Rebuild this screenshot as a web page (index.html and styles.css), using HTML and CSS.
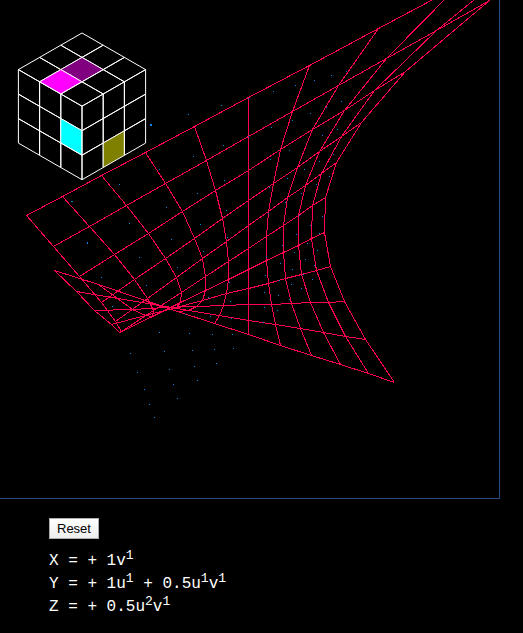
FILE: index.html
```html
<!DOCTYPE html>
<html lang="en">
<head>
  <meta charset="utf-8">
  <title>Surface viewer</title>
  <link rel="stylesheet" href="styles.css">
</head>
<body>
  <main>
    <div class="stage">
      <svg class="plot" viewBox="0 0 499 498" role="img" aria-label="Surface plot">
        <g id="cube" class="cube"></g>
        <g id="mesh" class="mesh"></g>
        <g id="dots" class="dots"></g>
      </svg>
    </div>
    <section class="panel">
      <button type="button" class="reset">Reset</button>
      <div class="equations">
        <p>X = + 1v<sup>1</sup></p>
        <p>Y = + 1u<sup>1</sup> + 0.5u<sup>1</sup>v<sup>1</sup></p>
        <p>Z = + 0.5u<sup>2</sup>v<sup>1</sup></p>
      </div>
    </section>
  </main>
  <script src="plot.js"></script>
</body>
</html>
```
FILE: styles.css
```css
body {
  margin: 0;
  background: #000;
  color: #fff;
  font-family: "Courier New", "Liberation Mono", monospace;
  font-size: 16px;
}

.stage {
  margin-right: 23px;
  border-right: 1px solid #264a80;
  border-bottom: 1px solid #264a80;
}

.plot {
  display: block;
  width: 100%;
  height: auto;
  overflow: hidden;
}

.cube polygon {
  fill: none;
  stroke: #fff;
  stroke-width: 1;
}

.cube .purple { fill: #800080; }
.cube .magenta { fill: #f0f; }
.cube .cyan { fill: #0ff; }
.cube .olive { fill: #808000; }

.mesh polyline {
  fill: none;
  stroke: #ff0051;
  stroke-width: 1;
  shape-rendering: crispEdges;
}

.dots rect {
  fill: #0a84f0;
  shape-rendering: crispEdges;
}

.panel {
  padding: 19px 49px;
}

.reset {
  display: block;
  height: 21px;
  padding: 0 7px;
  border: 1px solid #adadad;
  border-radius: 0;
  background: linear-gradient(#fff, #eee);
  color: #000;
  font: 13px "Liberation Sans", Arial, sans-serif;
}

.equations {
  margin-top: 11px;
}

.equations p {
  margin: 0;
  line-height: 23px;
}

.equations sup {
  font-size: 13px;
  line-height: 0;
  vertical-align: 6px;
}
```
FILE: plot.js
```js
const NS = "http://www.w3.org/2000/svg";

function add(parent, name, attrs) {
  const el = document.createElementNS(NS, name);
  for (const key in attrs) el.setAttribute(key, attrs[key]);
  document.getElementById(parent).appendChild(el);
}

// Each row is a straight line in v: its points at v = -1, 0 and 1.
const rows = [
  [[26, 215], [248, 98], [655, -119]],
  [[53, 246], [248, 137], [489, 0]],
  [[79, 276], [248, 170], [405, 71]],
  [[101, 302], [248, 199], [361, 122]],
  [[115, 321], [248, 225], [336, 162]],
  [[121, 331], [248, 248], [325, 197]],
  [[119, 332], [248, 269], [324, 232]],
  [[111, 324], [248, 288], [330, 266]],
  [[94, 310], [248, 305], [344, 301]],
  [[76, 291], [248, 319], [365, 339]],
  [[54, 270], [248, 334], [394, 382]]
];

// Perspective interpolation along a row.
function at([a, c, b], v) {
  const wa = (b[0] - c[0]) * (1 - v);
  const wb = (c[0] - a[0]) * (1 + v);
  return [0, 1].map(k => Math.round((wa * a[k] + wb * b[k]) / (wa + wb)) + 0.5);
}

const steps = [-5, -4, -3, -2, -1, 0, 1, 2, 3, 4, 5].map(n => n / 5);
const grid = rows.map(row => steps.map(v => at(row, v)));
grid.forEach(line => add("mesh", "polyline", { points: line.join(" ") }));
steps.forEach((v, i) => add("mesh", "polyline", { points: grid.map(line => line[i]).join(" ") }));

// Cube faces: origin and the two cell edges.
const faces = [
  { o: [82, 33], p: [21.2, 12.2], q: [-21.2, 12.2], fill: { "1,1": "purple", "1,2": "magenta" } },
  { o: [18.4, 69.6], p: [21.2, 12.2], q: [0, 24.5], fill: { "2,1": "cyan" } },
  { o: [82, 106.2], p: [21.2, -12.2], q: [0, 24.5], fill: { "1,2": "olive" } }
];
for (const { o, p, q, fill } of faces) {
  for (let i = 0; i < 3; i++) {
    for (let j = 0; j < 3; j++) {
      const corner = (a, b) => [o[0] + a * p[0] + b * q[0], o[1] + a * p[1] + b * q[1]];
      add("cube", "polygon", {
        points: [corner(i, j), corner(i + 1, j), corner(i + 1, j + 1), corner(i, j + 1)].join(" "),
        class: fill[i + "," + j] || "cell"
      });
    }
  }
}

const dots = [
  [119, 184], [159, 169], [71, 201, 2, 1], [129, 223], [87, 242, 1, 2], [166, 207], [171, 239],
  [139, 257], [101, 277], [146, 285], [177, 267], [112, 306], [159, 332], [197, 193], [224, 180],
  [226, 210], [200, 224], [227, 237], [203, 251], [229, 282], [230, 301], [208, 297], [210, 316],
  [231, 318], [185, 314], [189, 333], [212, 334], [232, 334], [192, 350], [214, 349], [233, 348],
  [269, 187], [285, 202], [301, 193], [316, 184], [268, 213], [322, 216], [310, 225], [296, 234],
  [282, 245], [266, 256], [307, 243], [317, 250], [294, 252], [305, 259], [280, 263], [314, 265],
  [292, 269], [265, 275], [303, 274], [279, 280], [312, 279], [291, 284], [301, 288], [264, 292],
  [278, 295], [289, 299], [264, 307], [277, 310], [263, 322], [314, 80], [331, 75], [346, 71],
  [341, 101], [326, 107], [310, 113], [337, 129], [292, 120], [322, 135], [289, 150], [333, 154],
  [319, 161], [304, 169], [287, 178], [329, 176], [319, 233], [299, 215], [188, 114], [221, 105],
  [248, 98], [273, 91], [295, 85], [193, 156], [223, 145], [248, 136], [271, 127], [270, 159],
  [130, 353], [137, 372], [164, 351], [144, 389], [169, 369], [194, 366], [216, 363], [149, 404],
  [173, 384], [197, 380], [154, 417], [177, 398], [150, 124, 2, 2]
];
dots.forEach(([x, y, width = 1, height = 1]) => add("dots", "rect", { x, y, width, height }));
```
